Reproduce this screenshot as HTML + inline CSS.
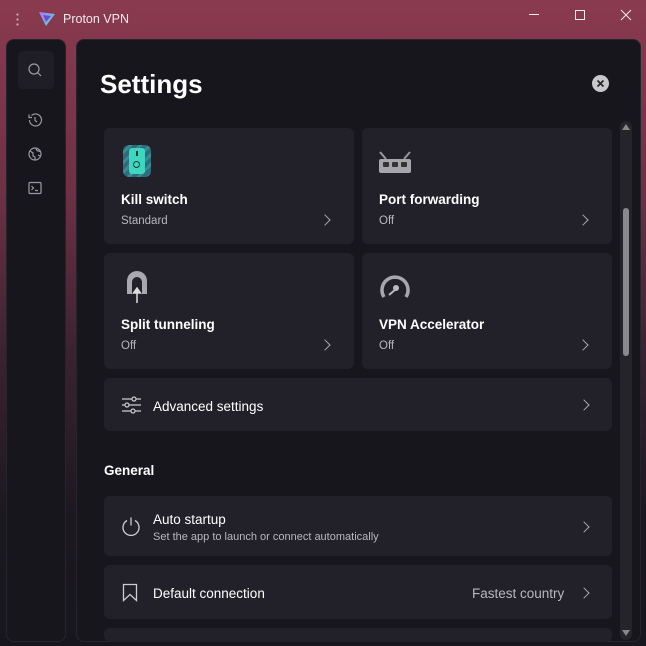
<!DOCTYPE html>
<html><head><style>
*{margin:0;padding:0;box-sizing:border-box}
body{width:646px;height:646px;overflow:hidden;font-family:"Liberation Sans",sans-serif;color:#fff;
background:linear-gradient(180deg,#8a3a4f 0%,#6e3044 30%,#3a2230 55%,#1c1820 80%,#17161e 100%);position:relative}
.abs{position:absolute}
.panel{position:absolute;background:#17161d;border:1px solid #26252d;border-radius:8px}
.card{position:absolute;background:#22212a;border-radius:6px}
.t{position:absolute;font-size:13.5px;font-weight:bold}
.s{position:absolute;font-size:11.5px;color:#b8b7bf}
.chev{position:absolute;width:8px;height:8px;border-right:1.1px solid #a8a7af;border-top:1.1px solid #a8a7af;transform:rotate(45deg)}
</style></head><body>
<div class="abs" style="left:16px;top:12px;width:3px;height:15px;background:radial-gradient(circle,#c9a9b2 1px,transparent 1.3px) 0 0/3px 5px"></div>
<svg class="abs" style="left:38px;top:11px" width="18" height="16" viewBox="0 0 18 16"><defs><linearGradient id="g" x1="0" y1="0" x2="1" y2="1"><stop offset="0" stop-color="#a77bff"/><stop offset="1" stop-color="#4be0d0"/></linearGradient></defs><path d="M1 1 L17 3 L8 15 Z" fill="url(#g)"/><path d="M5 4 L13 5 L8 11Z" fill="#6d4bd1"/></svg>
<div class="abs" style="left:63px;top:12px;font-size:12.5px;color:#f3e8ec">Proton VPN</div>
<div class="abs" style="left:529px;top:14px;width:10px;height:1px;background:#eee"></div>
<div class="abs" style="left:575px;top:10px;width:10px;height:10px;border:1px solid #eee"></div>
<svg class="abs" style="left:620px;top:9px" width="12" height="12"><path d="M1 1L11 11M11 1L1 11" stroke="#eee" stroke-width="1"/></svg>
<div class="panel" style="left:6px;top:39px;width:60px;height:603px"></div>
<div class="abs" style="left:18px;top:51px;width:36px;height:38px;background:#1f1e26;border-radius:5px"></div>
<svg class="abs" style="left:27px;top:62px" width="16" height="16" fill="none" stroke="#9a99a2" stroke-width="1.2"><circle cx="7" cy="7" r="5"/><path d="M10.5 10.5L14 14"/></svg>
<svg class="abs" style="left:27px;top:112px" width="16" height="16" fill="none" stroke="#9a99a2" stroke-width="1.2"><path d="M2.5 8A6 6 0 1 0 4.5 3.5"/><path d="M2 2.5v3h3"/><path d="M8 5v3.5l2 1.5"/></svg>
<svg class="abs" style="left:27px;top:146px" width="16" height="16" fill="none" stroke="#9a99a2" stroke-width="1.2"><circle cx="8" cy="8" r="6"/><path d="M3 5l3 2 0 3 2 1 0 3M9 2.5l1 2 3 1M11 9l2 1"/></svg>
<svg class="abs" style="left:27px;top:180px" width="16" height="16" fill="none" stroke="#9a99a2" stroke-width="1.2"><rect x="2" y="2.5" width="12" height="11" rx="1"/><path d="M4.5 6l2 2-2 2M8 10.5h3"/></svg>
<div class="panel" style="left:76px;top:39px;width:565px;height:603px"></div>
<div class="abs" style="left:100px;top:69px;font-size:26px;font-weight:bold">Settings</div>
<div class="abs" style="left:592px;top:75px;width:17px;height:17px;border-radius:50%;background:#c8c7cc"></div>
<svg class="abs" style="left:592px;top:75px" width="17" height="17"><path d="M5.5 5.5l6 6M11.5 5.5l-6 6" stroke="#222" stroke-width="1.6"/></svg>
<div class="abs" style="left:620px;top:121px;width:12px;height:519px;background:#25242b;border-radius:6px"></div>
<div class="abs" style="left:622px;top:124px;width:0;height:0;border-left:4px solid transparent;border-right:4px solid transparent;border-bottom:6px solid #888"></div>
<div class="abs" style="left:622px;top:630px;width:0;height:0;border-left:4px solid transparent;border-right:4px solid transparent;border-top:6px solid #888"></div>
<div class="abs" style="left:623px;top:208px;width:6px;height:148px;background:#8a8990;border-radius:3px"></div>
<div class="card" style="left:104px;top:128px;width:250px;height:116px"></div>
<div class="card" style="left:362px;top:128px;width:250px;height:116px"></div>
<div class="card" style="left:104px;top:253px;width:250px;height:116px"></div>
<div class="card" style="left:362px;top:253px;width:250px;height:116px"></div>
<div class="card" style="left:104px;top:378px;width:508px;height:53px"></div>
<div class="card" style="left:104px;top:496px;width:508px;height:60px"></div>
<div class="card" style="left:104px;top:565px;width:508px;height:54px"></div>
<div class="card" style="left:104px;top:628px;width:508px;height:14px"></div>
<div class="abs" style="left:123px;top:145px;width:28px;height:32px;border-radius:6px;background:repeating-linear-gradient(135deg,#2b6d7a 0 4px,#3c8a95 4px 7px)"></div>
<div class="abs" style="left:129px;top:148px;width:16px;height:26px;border-radius:3px;background:#3fd6c0"></div>
<div class="abs" style="left:136px;top:151px;width:1.5px;height:5px;background:#1a3a3a"></div>
<div class="abs" style="left:133px;top:161px;width:7px;height:7px;border:1.5px solid #1a3a3a;border-radius:50%"></div>
<svg class="abs" style="left:378px;top:150px" width="34" height="28"><path d="M2 2l6 7M32 2l-6 7" stroke="#999" stroke-width="2"/><rect x="1" y="9" width="32" height="14" rx="2" fill="#a6a5ab"/><rect x="5" y="12" width="6" height="5" rx="1" fill="#333"/><rect x="14" y="12" width="6" height="5" rx="1" fill="#333"/><rect x="23" y="12" width="6" height="5" rx="1" fill="#333"/></svg>
<svg class="abs" style="left:124px;top:270px" width="26" height="34"><path d="M3 24V11a10 10 0 0 1 20 0v13h-5V12a5 5 0 0 0-10 0v12z" fill="#a9a8ae"/><path d="M13 33V20M9.5 23l3.5-5 3.5 5z" stroke="#ddd" stroke-width="1.5" fill="#ddd"/></svg>
<svg class="abs" style="left:378px;top:272px" width="34" height="30"><path d="M6 25A13 13 0 1 1 28 25" fill="none" stroke="#a8a7ad" stroke-width="3.5"/><path d="M11 23l7-6" stroke="#bbb" stroke-width="2"/><circle cx="18" cy="16" r="3" fill="#bbb"/></svg>
<div class="t" style="left:121px;top:192px">Kill switch</div><div class="s" style="left:121px;top:215px">Standard</div>
<div class="t" style="left:379px;top:192px">Port forwarding</div><div class="s" style="left:379px;top:215px">Off</div>
<div class="t" style="left:121px;top:317px">Split tunneling</div><div class="s" style="left:121px;top:340px">Off</div>
<div class="t" style="left:379px;top:317px">VPN Accelerator</div><div class="s" style="left:379px;top:340px">Off</div>
<div class="chev" style="left:321px;top:216px"></div><div class="chev" style="left:579px;top:216px"></div>
<div class="chev" style="left:321px;top:341px"></div><div class="chev" style="left:579px;top:341px"></div>
<svg class="abs" style="left:121px;top:396px" width="20" height="18" fill="none" stroke="#ccc" stroke-width="1.2"><path d="M1 3h19M1 9h19M1 15h19"/><circle cx="13" cy="3" r="2" fill="#22212a"/><circle cx="6" cy="9" r="2" fill="#22212a"/><circle cx="12" cy="15" r="2" fill="#22212a"/></svg>
<div class="abs" style="left:153px;top:399px;font-size:13.5px">Advanced settings</div>
<div class="chev" style="left:580px;top:401px"></div>
<div class="abs" style="left:104px;top:463px;font-size:13.5px;font-weight:bold">General</div>
<svg class="abs" style="left:121px;top:516px" width="20" height="20" fill="none" stroke="#ccc" stroke-width="1.3"><path d="M6 4.5A8 8 0 1 0 14 4.5"/><path d="M10 1.5v8"/></svg>
<div class="abs" style="left:153px;top:512px;font-size:13.5px">Auto startup</div>
<div class="s" style="left:153px;top:531px;font-size:11px">Set the app to launch or connect automatically</div>
<div class="chev" style="left:580px;top:523px"></div>
<svg class="abs" style="left:122px;top:583px" width="16" height="19" fill="none" stroke="#ccc" stroke-width="1.3"><path d="M1.5 1.5h13v16l-6.5-6-6.5 6z"/></svg>
<div class="abs" style="left:153px;top:586px;font-size:13.5px">Default connection</div>
<div class="abs" style="left:472px;top:586px;font-size:13.5px;color:#b8b7bf">Fastest country</div>
<div class="chev" style="left:580px;top:589px"></div>
</body></html>
